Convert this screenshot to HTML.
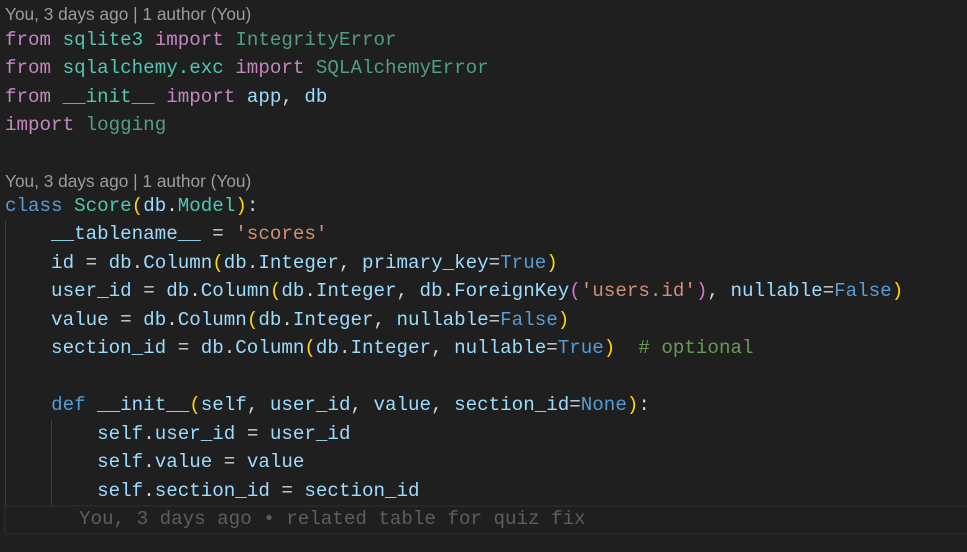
<!DOCTYPE html>
<html><head><meta charset="utf-8"><style>
html,body{margin:0;padding:0;background:#1f1f1f;width:967px;height:552px;overflow:hidden;position:relative}
.l{position:absolute;left:5px;height:28px;line-height:28px;white-space:pre;font-family:"Liberation Mono",monospace;font-size:19.2px;color:#9cdcfe}
.b{position:absolute;left:5px;height:24px;line-height:24px;white-space:pre;font-family:"Liberation Sans",sans-serif;font-size:17.3px;color:#9d9d9d}
.k{color:#c586c0}.m{color:#4ec9b0}.d{color:#4e9f86}.v{color:#9cdcfe}.w{color:#d4d4d4}
.bl{color:#569cd6}.s{color:#ce9178}.c{color:#6a9955}.y{color:#ffd700}.p{color:#da70d6}
.g{position:absolute;width:1px;background:#404040}
.cur{position:absolute;left:4px;top:505px;width:970px;height:26px;border:2px solid #282828}
</style></head><body>
<div class="cur"></div>
<div class="g" style="left:5px;top:221px;height:284px"></div>
<div class="g" style="left:51px;top:420px;height:85px"></div>
<div class="b" style="top:2px">You, 3 days ago | 1 author (You)</div>
<div class="l" style="top:26px"><span class="k">from</span> <span class="m">sqlite3</span> <span class="k">import</span> <span class="d">IntegrityError</span></div>
<div class="l" style="top:54px"><span class="k">from</span> <span class="m">sqlalchemy.exc</span> <span class="k">import</span> <span class="d">SQLAlchemyError</span></div>
<div class="l" style="top:83px"><span class="k">from</span> <span class="m">__init__</span> <span class="k">import</span> app<span class="w">,</span> db</div>
<div class="l" style="top:111px"><span class="k">import</span> <span class="d">logging</span></div>
<div class="b" style="top:169px">You, 3 days ago | 1 author (You)</div>
<div class="l" style="top:192px"><span class="bl">class</span> <span class="m">Score</span><span class="y">(</span>db<span class="w">.</span><span class="m">Model</span><span class="y">)</span><span class="w">:</span></div>
<div class="l" style="top:220px">    __tablename__ <span class="w">=</span> <span class="s">'scores'</span></div>
<div class="l" style="top:249px">    id <span class="w">=</span> db<span class="w">.</span>Column<span class="y">(</span>db<span class="w">.</span>Integer<span class="w">,</span> primary_key<span class="w">=</span><span class="bl">True</span><span class="y">)</span></div>
<div class="l" style="top:277px">    user_id <span class="w">=</span> db<span class="w">.</span>Column<span class="y">(</span>db<span class="w">.</span>Integer<span class="w">,</span> db<span class="w">.</span>ForeignKey<span class="p">(</span><span class="s">'users.id'</span><span class="p">)</span><span class="w">,</span> nullable<span class="w">=</span><span class="bl">False</span><span class="y">)</span></div>
<div class="l" style="top:306px">    value <span class="w">=</span> db<span class="w">.</span>Column<span class="y">(</span>db<span class="w">.</span>Integer<span class="w">,</span> nullable<span class="w">=</span><span class="bl">False</span><span class="y">)</span></div>
<div class="l" style="top:334px">    section_id <span class="w">=</span> db<span class="w">.</span>Column<span class="y">(</span>db<span class="w">.</span>Integer<span class="w">,</span> nullable<span class="w">=</span><span class="bl">True</span><span class="y">)</span>  <span class="c"># optional</span></div>
<div class="l" style="top:391px">    <span class="bl">def</span> __init__<span class="y">(</span>self<span class="w">,</span> user_id<span class="w">,</span> value<span class="w">,</span> section_id<span class="w">=</span><span class="bl">None</span><span class="y">)</span><span class="w">:</span></div>
<div class="l" style="top:420px">        self<span class="w">.</span>user_id <span class="w">=</span> user_id</div>
<div class="l" style="top:448px">        self<span class="w">.</span>value <span class="w">=</span> value</div>
<div class="l" style="top:477px">        self<span class="w">.</span>section_id <span class="w">=</span> section_id</div>
<div class="l" style="top:505px;left:79px;color:#5e5e5e">You, 3 days ago • related table for quiz fix</div>
</body></html>
